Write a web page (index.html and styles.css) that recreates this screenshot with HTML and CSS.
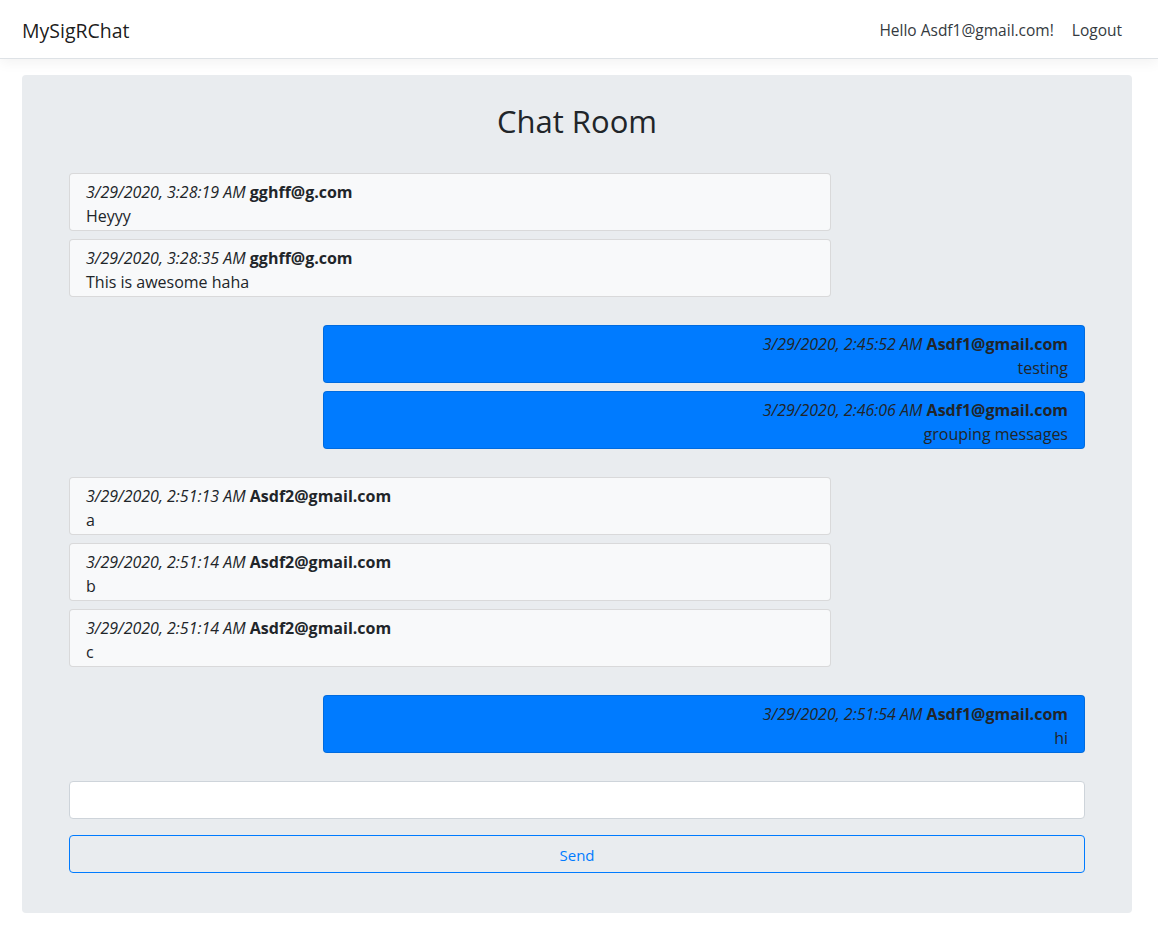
FILE: index.html
```html
<!DOCTYPE html>
<html lang="en">
<head>
<meta charset="utf-8">
<title>Chat Room - MySigRChat</title>
<link rel="stylesheet" href="styles.css">
</head>
<body>
<header class="navbar">
  <a class="brand" href="#">MySigRChat</a>
  <nav class="nav">
    <a class="nav-link" href="#">Hello Asdf1@gmail.com!</a>
    <a class="nav-link" href="#">Logout</a>
  </nav>
</header>
<main class="main">
  <section class="jumbotron">
    <h2 class="title">Chat Room</h2>
    <div class="messages">
      <div class="group">
        <div class="msg other"><div><em>3/29/2020, 3:28:19 AM</em> <strong>gghff@g.com</strong></div><div>Heyyy</div></div>
        <div class="msg other"><div><em>3/29/2020, 3:28:35 AM</em> <strong>gghff@g.com</strong></div><div>This is awesome haha</div></div>
      </div>
      <div class="group mine">
        <div class="msg self"><div><em>3/29/2020, 2:45:52 AM</em> <strong>Asdf1@gmail.com</strong></div><div>testing</div></div>
        <div class="msg self"><div><em>3/29/2020, 2:46:06 AM</em> <strong>Asdf1@gmail.com</strong></div><div>grouping messages</div></div>
      </div>
      <div class="group">
        <div class="msg other"><div><em>3/29/2020, 2:51:13 AM</em> <strong>Asdf2@gmail.com</strong></div><div>a</div></div>
        <div class="msg other"><div><em>3/29/2020, 2:51:14 AM</em> <strong>Asdf2@gmail.com</strong></div><div>b</div></div>
        <div class="msg other"><div><em>3/29/2020, 2:51:14 AM</em> <strong>Asdf2@gmail.com</strong></div><div>c</div></div>
      </div>
      <div class="group mine">
        <div class="msg self"><div><em>3/29/2020, 2:51:54 AM</em> <strong>Asdf1@gmail.com</strong></div><div>hi</div></div>
      </div>
    </div>
    <form class="composer">
      <input class="form-control" type="text">
      <button class="btn-send" type="button">Send</button>
    </form>
  </section>
</main>
</body>
</html>
```

FILE: styles.css
```css
* { box-sizing: border-box; }
html, body { margin: 0; padding: 0; }
body {
  font-family: "Open Sans", "Noto Sans", sans-serif;
  font-size: 16px;
  line-height: 1.5;
  color: #212529;
  background: #fff;
}
.navbar {
  height: 59px;
  display: flex;
  align-items: center;
  justify-content: space-between;
  padding: 3px 22px 0 22px;
  background: #fff;
  border-bottom: 1px solid #dee2e6;
  box-shadow: 0 4px 12px rgba(0,0,0,.05);
}
.brand {
  font-size: 19.5px;
  color: rgba(0,0,0,.9);
  text-decoration: none;
  line-height: 30px;
}
.nav { display: flex; gap: 0; }
.nav-link {
  color: #343a40;
  text-decoration: none;
  padding: 8px 9px;
  font-size: 15.5px;
}
.nav-link:last-child { padding-right: 14px; }
.main { padding: 16px 26px 22px 22px; }
.jumbotron {
  background: #e9ecef;
  border-radius: 4px;
  padding: 27px 47px 40px;
}
.title {
  margin: 0 0 33px;
  font-size: 31px;
  font-weight: 400;
  line-height: 38px;
  text-align: center;
}
.messages { display: flex; flex-direction: column; gap: 28px; }
.group { display: flex; flex-direction: column; gap: 8px; align-items: flex-start; }
.group.mine { align-items: flex-end; }
.msg {
  width: 75%;
  padding: 6px 16px 2px;
  border: 1px solid rgba(0,0,0,.125);
  border-radius: 4px;
  line-height: 24px;
}
.msg.other { background: #f8f9fa; }
.msg.self { background: #007bff; text-align: right; }
.msg strong { font-weight: 700; }
.composer { margin-top: 28px; display: flex; flex-direction: column; gap: 16px; }
.form-control {
  height: 38px;
  width: 100%;
  border: 1px solid #ced4da;
  border-radius: 4px;
  background: #fff;
  font: inherit;
  padding: 6px 12px;
}
.btn-send {
  height: 38px;
  width: 100%;
  border: 1px solid #007bff;
  border-radius: 4px;
  background: transparent;
  color: #007bff;
  font: inherit;
  font-size: 15px;
  padding-top: 3px;
  cursor: pointer;
}
```
